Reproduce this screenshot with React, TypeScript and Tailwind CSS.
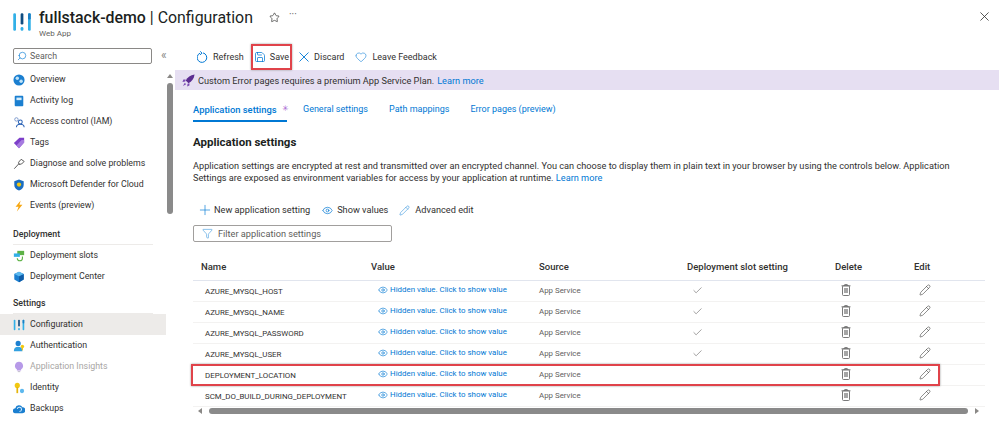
import { Check, Eye, Funnel, Heart, Pencil, Plus, Save, Search, Star } from "lucide-react";
import type { ReactNode } from "react";

const FONT = "font-['Roboto','Noto_Sans',sans-serif]";

// Web app bars logo, also used for the Configuration entry
const BarsIcon = ({ size }: { size: number }) => (
  <svg width={size} height={size} viewBox="0 0 16 16">
    <rect x="1" y="1" width="2.2" height="14" rx="1" fill="#32b0e7" />
    <rect x="6.9" y="1" width="2.2" height="9" rx="1" fill="#0f4c81" />
    <rect x="6.9" y="12" width="2.2" height="3" rx="1" fill="#32b0e7" />
    <rect x="12.800" y="1" width="2.2" height="14" rx="1" fill="#32b0e7" />
    <rect x="12.800" y="1" width="2.2" height="5" rx="1" fill="#1b7fc4" />
  </svg>
);

const CloseIcon = ({ size, className }: { size: number; className?: string }) => (
  <svg width={size} height={size} viewBox="0 0 10 10" fill="none" stroke="currentColor" strokeWidth="0.9" className={className}>
    <path d="M.5.5l9 9M9.500.5l-9 9" />
  </svg>
);

const RefreshIcon = () => (
  <svg width="11" height="12" viewBox="0 0 11 12" fill="none" stroke="#0078d4" strokeWidth="1">
    <path d="M3 2.200a4.800 4.800 0 1 0 3-.3" />
    <path d="M3.300.3 5 2.200 3 3.800" />
  </svg>
);

const icons: Record<string, ReactNode> = {
  overview: (
    <svg width="12" height="12" viewBox="0 0 14 14">
      <circle cx="7" cy="7" r="6.5" fill="#1b7fd0" />
      <circle cx="5" cy="5" r="2" fill="#bfe3f7" />
      <circle cx="9.5" cy="8.5" r="2" fill="#bfe3f7" />
    </svg>
  ),
  log: (
    <svg width="12" height="12" viewBox="0 0 14 14">
      <rect x="2" y="1" width="10" height="12" rx="1" fill="#1b7fd0" />
      <rect x="4" y="3" width="6" height="3" fill="#d5ecfa" />
    </svg>
  ),
  iam: (
    <svg width="12" height="12" viewBox="0 0 14 14" fill="none">
      <circle cx="4" cy="4" r="2" stroke="#6f8fc7" />
      <circle cx="8.5" cy="7" r="2.3" stroke="#2a62b5" strokeWidth="1.2" />
      <path d="M4 13c0-2.500 2-3.500 4.500-3.500S13 10.500 13 13" stroke="#2a62b5" strokeWidth="1.2" />
    </svg>
  ),
  tags: (
    <svg width="12" height="12" viewBox="0 0 14 14">
      <path d="M1 7 7.500 1H13v5.500L7 13z" fill="#7d3fc9" />
      <path d="M4 10 10 3.500h3v3L7 13z" fill="#a67be0" />
    </svg>
  ),
  diagnose: (
    <svg width="12" height="12" viewBox="0 0 14 14" fill="none" stroke="#444" strokeWidth="1">
      <path d="M1.500 12.500 7 6.500M7 7.500l-.5-2.500 3-3.500L13 4l-3 3z" />
    </svg>
  ),
  defender: (
    <svg width="12" height="12" viewBox="0 0 14 14">
      <path d="M7 .5 12.500 2.500V7c0 3.500-2.500 5.500-5.500 6.500C4 12.500 1.500 10.500 1.500 7V2.500z" fill="#1b6ec2" />
      <circle cx="7" cy="6.500" r="2.500" fill="#f2c811" />
    </svg>
  ),
  events: (
    <svg width="12" height="12" viewBox="0 0 14 14">
      <path d="M9 .5 3 8h3.500L4.500 13.500 11 5.500H7.500z" fill="#f7a711" />
    </svg>
  ),
  slots: (
    <svg width="12" height="12" viewBox="0 0 14 14">
      <rect x="5" y="1" width="8" height="5" fill="#5db246" />
      <rect x="1" y="4" width="7" height="4" fill="#32b0e7" />
      <path d="M5 9.500a3 3 0 0 0 6 0V7.500" fill="none" stroke="#5db246" strokeWidth="1.300" />
    </svg>
  ),
  center: (
    <svg width="12" height="12" viewBox="0 0 14 14">
      <path d="M7 1 12.500 3.500V10L7 13 1.500 10V3.500z" fill="#1b7fd0" />
      <path d="M7 6v7l5.500-3V3.500z" fill="#0f5ca8" />
      <path d="M7 1 12.500 3.500 7 6 1.500 3.500z" fill="#5cb8ee" />
    </svg>
  ),
  config: <BarsIcon size={12} />,
  auth: (
    <svg width="12" height="12" viewBox="0 0 14 14">
      <circle cx="6" cy="4" r="3" fill="#1b7fd0" />
      <path d="M1 13c0-3.500 2-5 5-5s5 1.500 5 5z" fill="#32a0e0" />
      <circle cx="11" cy="7.500" r="2" fill="#f2c811" />
      <rect x="10.300" y="8" width="1.400" height="4" fill="#f2c811" />
    </svg>
  ),
  insights: (
    <svg width="12" height="12" viewBox="0 0 14 14">
      <path d="M7 1a4.700 4.700 0 0 0-2.500 8.700V11h5V9.700A4.700 4.700 0 0 0 7 1z" fill="#b79ae8" />
      <rect x="5.500" y="11.500" width="3" height="1.500" fill="#c9c4d4" />
    </svg>
  ),
  identity: (
    <svg width="12" height="12" viewBox="0 0 14 14">
      <circle cx="5" cy="4" r="3" fill="#f2c811" />
      <rect x="4" y="6" width="2" height="7" fill="#e5b50c" />
      <circle cx="10.500" cy="10.500" r="2.500" fill="#5cb8ee" />
    </svg>
  ),
  backups: (
    <svg width="12" height="12" viewBox="0 0 14 14">
      <path d="M3 12a3 3 0 0 1-.3-6A4.500 4.500 0 0 1 11 5a3.500 3.500 0 0 1 0 7z" fill="#1b7fd0" />
      <path d="M5 7a2.500 2.500 0 1 1 2.500 3" fill="none" stroke="#d5ecfa" strokeWidth="1.200" />
    </svg>
  ),
};

const NavItem = ({ icon, label, active, muted }: { icon: string; label: string; active?: boolean; muted?: boolean }) => (
  <div className={`flex h-[21px] items-center gap-[5px] pl-[12px] text-[8.8px] whitespace-nowrap ${active ? "bg-[#edebe9]" : ""} ${muted ? "text-[#a8a6a4]" : "text-[#323130]"}`}>
    <span className="flex w-[13px] shrink-0 justify-center">{icons[icon]}</span>
    <span>{label}</span>
  </div>
);

const NavHeading = ({ label, className }: { label: string; className: string }) => (
  <div className={`mx-[13px] flex h-[21px] items-center border-b border-[#edebe9] pt-[2px] text-[8.8px] font-medium text-[#323130] ${className}`}>
    {label}
  </div>
);

const Sidebar = () => (
  <aside className="flex w-[175px] shrink-0 flex-col">
    <div className="mt-[4px] flex items-start">
      <div className="ml-[13px] flex h-[16px] w-[139px] items-center gap-[3px] rounded-[2px] border border-[#8a8886] pl-[3px] text-[8.8px] text-[#605e5c]">
        <Search size={10} strokeWidth={1.5} className="-scale-x-100 text-[#0078d4]" />
        <span className="pt-[1px]">Search</span>
      </div>
      <span className="ml-[9px] text-[12px] leading-[15px] text-[#8a8886]">«</span>
    </div>
    <div className="flex min-h-0 flex-1">
      <div className="mt-[5px] w-[166px] shrink-0">
        <NavItem icon="overview" label="Overview" />
        <NavItem icon="log" label="Activity log" />
        <NavItem icon="iam" label="Access control (IAM)" />
        <NavItem icon="tags" label="Tags" />
        <NavItem icon="diagnose" label="Diagnose and solve problems" />
        <NavItem icon="defender" label="Microsoft Defender for Cloud" />
        <NavItem icon="events" label="Events (preview)" />
        <NavHeading label="Deployment" className="mt-[8px]" />
        <NavItem icon="slots" label="Deployment slots" />
        <NavItem icon="center" label="Deployment Center" />
        <NavHeading label="Settings" className="mt-[6px]" />
        <NavItem icon="config" label="Configuration" active />
        <NavItem icon="auth" label="Authentication" />
        <NavItem icon="insights" label="Application Insights" muted />
        <NavItem icon="identity" label="Identity" />
        <NavItem icon="backups" label="Backups" />
      </div>
      <div className="ml-[1px] flex w-[6px] flex-col items-center pt-[10px]">
        <div className="h-0 w-0 border-x-[3px] border-b-[4px] border-x-transparent border-b-[#8a8886]" />
        <div className="mt-[5px] h-[131px] w-[6px] rounded-full bg-[#8a8a8a]" />
      </div>
    </div>
  </aside>
);

const ToolButton = ({ icon, label, boxed }: { icon: ReactNode; label: string; boxed?: boolean }) => (
  <div className={`flex h-[26px] items-center text-[9px] text-[#323130] ${boxed ? "gap-[4px] border-2 border-[#e0434a] pr-[1px] pl-[1px] shadow-[0_0_2px_#999]" : "gap-[5px]"}`}>
    {icon}
    <span className="pt-[2px]">{label}</span>
  </div>
);

const TrashIcon = () => (
  <svg width="10" height="12" viewBox="0 0 10 12" fill="none" stroke="#6b6b6b" strokeWidth="0.9">
    <rect x="1.500" y="1.800" width="7" height="9.700" rx="1" />
    <path d="M.5 1.800h9M3.700 1.800V.6h2.600v1.200" />
    <path d="M4 4v5M6 4v5" strokeWidth="1.200" />
  </svg>
);

const rows = ["AZURE_MYSQL_HOST", "AZURE_MYSQL_NAME", "AZURE_MYSQL_PASSWORD", "AZURE_MYSQL_USER", "DEPLOYMENT_LOCATION", "SCM_DO_BUILD_DURING_DEPLOYMENT"];
const GRID = "grid grid-cols-[178px_168px_148px_148px_79px_71px] items-center";

const SettingsTable = () => (
  <div className="relative mt-[12px] w-[792px]">
    <div className={`${GRID} h-[27px] border-b border-[#e1e5ee] text-[9.5px] font-medium text-[#323130]`}>
      <span className="pl-[8px]">Name</span>
      <span>Value</span>
      <span>Source</span>
      <span>Deployment slot setting</span>
      <span>Delete</span>
      <span>Edit</span>
    </div>
    {rows.map((name, i) => (
      <div key={name} className={`${GRID} h-[21px] border-b border-[#f3f2f1] text-[7.9px]`}>
        <span className="pt-[2px] pl-[12px] text-[#323130]">{name}</span>
        <span className="flex items-center gap-[2px] pb-[2px] pl-[7px] text-[#0078d4]">
          <Eye size={10} strokeWidth={1.5} />
          Hidden value. Click to show value
        </span>
        <span className="text-[#605e5c]">App Service</span>
        <span className="pb-[2px] pl-[5px]">{i < 4 && <Check size={11} strokeWidth={1} className="text-[#323130]" />}</span>
        <span className="pb-[2px] pl-[6px]"><TrashIcon /></span>
        <span className="pb-[2px] pl-[5px]"><Pencil size={12} strokeWidth={1.1} className="text-[#323130]" /></span>
      </div>
    ))}
    {/* Red highlight round the DEPLOYMENT_LOCATION row */}
    <div className="absolute top-[110px] left-[-2px] h-[22px] w-[749px] border-2 border-[#e0434a] shadow-[0_0_2px_#999]" />
    <div className="ml-[5px] flex h-[8px] items-center gap-[7px]">
      <div className="h-0 w-0 border-y-[3px] border-r-[4px] border-y-transparent border-r-[#8a8886]" />
      <div className="h-[6px] w-[759px] rounded-full bg-[#8a8a8a]" />
      <div className="h-0 w-0 border-y-[3px] border-l-[4px] border-y-transparent border-l-[#8a8886]" />
    </div>
  </div>
);

export default function App() {
  return (
    <div className={`flex h-[421px] w-[999px] flex-col overflow-hidden bg-white ${FONT}`}>
      <header className="flex h-[44px] shrink-0 items-start pt-[8px]">
        <div className="ml-[12px] mt-[4px]"><BarsIcon size={20} /></div>
        <div className="ml-[7px] flex flex-col">
          <h1 className="mt-[1px] text-[15.9px] leading-[18px] text-[#201f1e]">
            <span className="font-medium">fullstack-demo</span> | Configuration
          </h1>
          <span className="text-[8px] leading-[14px] text-[#605e5c]">Web App</span>
        </div>
        <Star size={11} strokeWidth={1.5} className="ml-[16px] mt-[4px] text-[#323130]" />
        <span className="ml-[9px] text-[10px] leading-[14px] text-[#605e5c]">···</span>
        <CloseIcon size={9} className="ml-auto mr-[10px] mt-[4px] text-[#323130]" />
      </header>
      <div className="flex min-h-0 flex-1">
        <Sidebar />
        <main className="min-w-0 flex-1">
          <div className="flex items-center pl-[22px]">
            <ToolButton icon={<RefreshIcon />} label="Refresh" />
            <div className="ml-[7px]">
              <ToolButton icon={<Save size={12} strokeWidth={1.5} className="text-[#0078d4]" />} label="Save" boxed />
            </div>
            <div className="ml-[7px]">
              <ToolButton icon={<CloseIcon size={10} className="text-[#0078d4]" />} label="Discard" />
            </div>
            <div className="ml-[11px]">
              <ToolButton icon={<Heart size={12} strokeWidth={1.1} className="text-[#0078d4]" />} label="Leave Feedback" />
            </div>
          </div>
          <div className="flex h-[20px] items-center gap-[3px] bg-[#e6dff2] pl-[7px] text-[9.2px] text-[#323130]">
            <svg width="13" height="13" viewBox="0 0 14 14">
              <path d="M13.500.5C9 1 6 3.500 4 7l3 3c3.500-2 6-5 6.500-9.500z" fill="#5c2d91" />
              <path d="M4 6H1.500L.5 8.500 3.500 8zM8 10v2.500L5.500 13.500 6 10.500zM3 9.500 1 13l3.500-2z" fill="#7b4bb3" />
            </svg>
            <span className="pt-[2px]">Custom Error pages requires a premium App Service Plan.</span>
            <span className="pt-[2px] text-[#0078d4]">Learn more</span>
          </div>
          <div className="ml-[18px] mr-[14px]">
            <div className="mt-[13px] flex gap-[21px] text-[9px] whitespace-nowrap text-[#0078d4]">
              <div className="mr-[-5px] flex h-[19px] w-[94px] gap-[5px] border-b-2 border-[#0078d4] text-[9.4px] font-medium">
                <span>Application settings</span>
                <span className="text-[8px] font-normal text-[#a45fd0]">✳</span>
              </div>
              <span>General settings</span>
              <span>Path mappings</span>
              <span>Error pages (preview)</span>
            </div>
            <h2 className="mt-[12px] text-[11.5px] leading-[16px] font-bold text-[#201f1e]">Application settings</h2>
            <p className="mt-[10px] w-[770px] text-[9.2px] leading-[12px] text-[#323130]">
              Application settings are encrypted at rest and transmitted over an encrypted channel. You can choose to display them in plain text in your browser by using the controls below. Application Settings are exposed as environment variables for access by your application at runtime. <span className="text-[#0078d4]">Learn more</span>
            </p>
            <div className="mt-[18px] flex h-[16px] items-center pl-[4px] text-[9.2px] text-[#323130]">
              <Plus size={16} strokeWidth={1} className="text-[#0078d4]" />
              <span className="ml-[1px]">New application setting</span>
              <Eye size={11} strokeWidth={1.5} className="ml-[12px] text-[#0078d4]" />
              <span className="ml-[4px]">Show values</span>
              <Pencil size={11} strokeWidth={1} className="ml-[11px] text-[#0078d4]" />
              <span className="ml-[5px]">Advanced edit</span>
            </div>
            <div className="mt-[7px] flex h-[17px] w-[199px] items-center gap-[5px] rounded-[2px] border border-[#a19f9d] pl-[8px] text-[9.2px] text-[#605e5c]">
              <Funnel size={11} strokeWidth={1} className="text-[#0078d4]" />
              <span>Filter application settings</span>
            </div>
            <SettingsTable />
          </div>
        </main>
      </div>
    </div>
  );
}
